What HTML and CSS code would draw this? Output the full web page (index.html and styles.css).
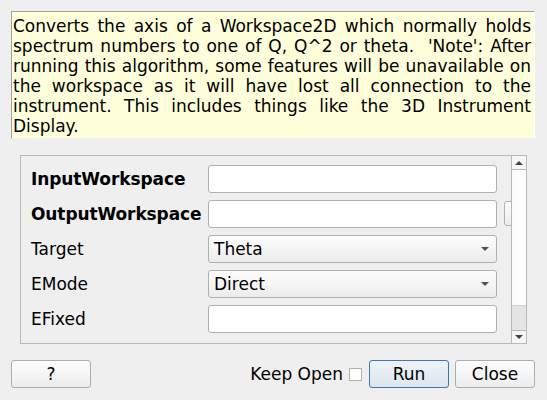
FILE: index.html
```html
<!DOCTYPE html>
<html>
<head>
<meta charset="utf-8">
<link rel="stylesheet" href="styles.css">
</head>
<body>
<div class="dialog">
  <div class="desc">Converts the axis of a Workspace2D which normally holds spectrum numbers to one of Q, Q^2 or theta.&nbsp; 'Note': After running this algorithm, some features will be unavailable on the workspace as it will have lost all connection to the instrument. This includes things like the 3D Instrument Display.</div>

  <div class="scrollarea">
    <div class="props">
      <div class="label bold">InputWorkspace</div>
      <div class="field input"></div>
      <div class="extra"></div>

      <div class="label bold">OutputWorkspace</div>
      <div class="field input"></div>
      <div class="extra"><div class="browse"></div></div>

      <div class="label">Target</div>
      <div class="field combo"><span>Theta</span><span class="arrow"></span></div>
      <div class="extra"></div>

      <div class="label">EMode</div>
      <div class="field combo"><span>Direct</span><span class="arrow"></span></div>
      <div class="extra"></div>

      <div class="label">EFixed</div>
      <div class="field input"></div>
      <div class="extra"></div>
    </div>
    <div class="vscroll">
      <div class="sbtn up"><span class="tri-up"></span></div>
      <div class="track"></div>
      <div class="handle"></div>
      <div class="sbtn down"><span class="tri-down"></span></div>
    </div>
  </div>

  <div class="buttons">
    <div class="btn">?</div>
    <div class="spacer"></div>
    <div class="keep">Keep Open</div>
    <div class="check"></div>
    <div class="btn default">Run</div>
    <div class="btn">Close</div>
  </div>
</div>
</body>
</html>
```

FILE: styles.css
```css
html, body {
  margin: 0;
  padding: 0;
  background: #efefef;
}
body {
  font-family: "DejaVu Sans", "Liberation Sans", sans-serif;
  font-size: 17px;
  color: #000;
}
.dialog {
  width: 547px;
  height: 400px;
  box-sizing: border-box;
  padding: 11px 12px 0 11px;
  display: flex;
  flex-direction: column;
}
.desc {
  box-sizing: border-box;
  height: 128px;
  background: #ffffdc;
  border-top: 1px solid #a0a0a0;
  border-left: 1px solid #a0a0a0;
  border-right: 1px solid #ffffff;
  border-bottom: 1px solid #efefef;
  padding: 4px 3px 0 1px;
  line-height: 20px;
  text-align: justify;
}
.scrollarea {
  margin: 16px 8px 0 9px;
  height: 189px;
  box-sizing: border-box;
  border: 1px solid #b8b8b8;
  display: flex;
  overflow: hidden;
}
.props {
  flex: 1;
  overflow: hidden;
  padding: 9px 0 0 10px;
  display: grid;
  grid-template-columns: 170px 289px 40px;
  grid-auto-rows: 28px;
  column-gap: 7px;
  row-gap: 7px;
  align-content: start;
}
.label {
  display: flex;
  align-items: center;
  white-space: nowrap;
}
.bold { font-weight: bold; letter-spacing: -0.1px; }
.field {
  box-sizing: border-box;
  border: 1px solid #b0b0b0;
  border-radius: 3px;
  background: #ffffff;
}
.combo {
  background: linear-gradient(#fdfdfd, #ececec);
  display: flex;
  align-items: center;
  justify-content: space-between;
  padding: 0 7px 0 5px;
}
.arrow {
  width: 0;
  height: 0;
  border-left: 4px solid transparent;
  border-right: 4px solid transparent;
  border-top: 4px solid #505050;
}
.browse {
  box-sizing: border-box;
  height: 25px;
  margin-top: 1px;
  width: 30px;
  border: 1px solid #b0b0b0;
  border-radius: 3px;
  background: linear-gradient(#fdfdfd, #ececec);
}
.vscroll {
  width: 14px;
  border-left: 1px solid #b8b8b8;
  display: flex;
  flex-direction: column;
  background: #f9f9f9;
}
.sbtn {
  height: 13px;
  display: flex;
  align-items: center;
  justify-content: center;
  background: #f6f6f6;
}
.up { border-bottom: 1px solid #b8b8b8; }
.down { border-top: 1px solid #b8b8b8; height: 12px; }
.tri-up {
  width: 0; height: 0;
  border-left: 4px solid transparent;
  border-right: 4px solid transparent;
  border-bottom: 4px solid #404040;
}
.tri-down {
  width: 0; height: 0;
  border-left: 4px solid transparent;
  border-right: 4px solid transparent;
  border-top: 4px solid #404040;
}
.track {
  flex: 1;
  background: linear-gradient(90deg, #fafafa, #ffffff);
}
.handle {
  height: 24px;
  background: #e4e4e4;
  border-top: 1px solid #d2d2d2;
}
.buttons {
  margin-top: 16px;
  display: flex;
  align-items: center;
  height: 28px;
}
.btn {
  box-sizing: border-box;
  width: 80px;
  height: 28px;
  border: 1px solid #adadad;
  border-radius: 3px;
  background: linear-gradient(#fdfdfd, #ededed);
  display: flex;
  align-items: center;
  justify-content: center;
}
.btn.default {
  border-color: #3b78b5;
  background: linear-gradient(#eef3f8, #dde5ee);
  margin-right: 6px;
}
.spacer { flex: 1; }
.keep { margin-right: 6px; }
.check {
  box-sizing: border-box;
  width: 13px;
  height: 13px;
  border: 1px solid #b0b0b0;
  background: #ffffff;
  margin-right: 7px;
}
```
